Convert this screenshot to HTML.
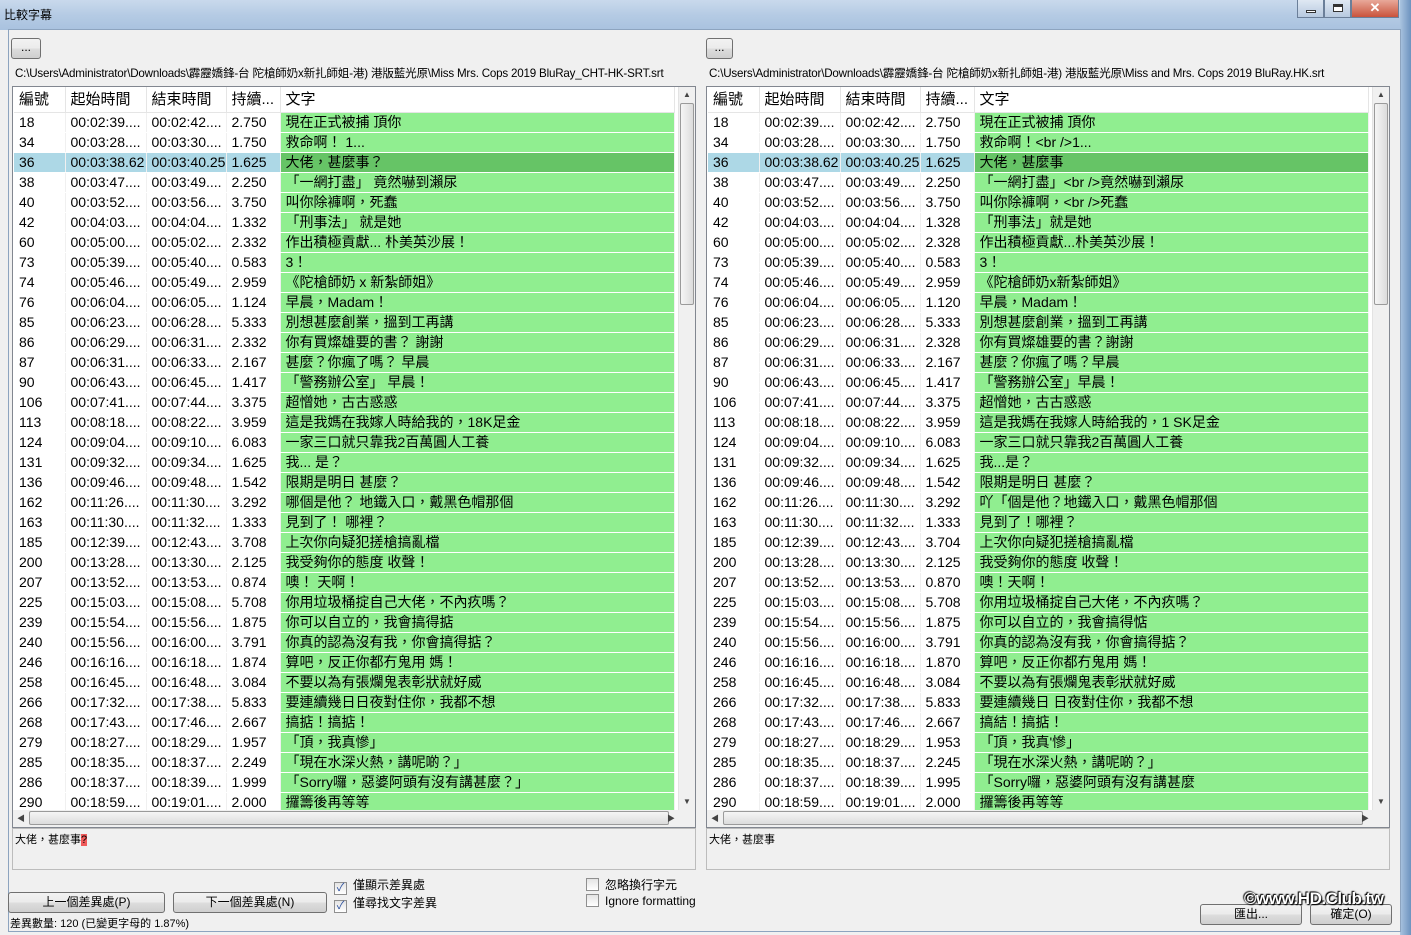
<!DOCTYPE html>
<html><head><meta charset="utf-8">
<style>
*{box-sizing:border-box;margin:0;padding:0}
body{width:1411px;height:935px;overflow:hidden;background:#f0f0f0;font-family:"Liberation Sans","Noto Sans CJK TC",sans-serif;position:relative}
.title{position:absolute;left:0;top:0;width:1411px;height:30px;background:linear-gradient(#c9d9ec,#b5cbe4 50%,#a9c2df);}
.title span{position:absolute;left:4px;top:6px;font-size:12px;color:#000}
.frameR{position:absolute;left:1400px;top:0;width:11px;height:935px;background:linear-gradient(90deg,#aac4e0,#6d93bf)}
.client{position:absolute;left:8px;top:29px;width:1393px;height:903px;background:#f0f0f0;border:1px solid #8da4bf}
.wbtn{position:absolute;top:0;height:18px;border:1px solid #6b7f99;border-top:none;background:linear-gradient(#dfe8f3,#b7c9df);}
.close{background:linear-gradient(#e8a99a,#c9533c);}
.btn{position:absolute;border:1px solid #707070;border-radius:3px;background:linear-gradient(#f2f2f2,#ebebeb 50%,#dddddd 51%,#cfcfcf);font-size:12px;text-align:center;color:#000}
.path{position:absolute;font-size:11.6px;top:65px;white-space:nowrap;letter-spacing:-0.2px}
.list{position:absolute;top:86px;width:684px;height:742px;background:#fff;border:1px solid #828790;overflow:hidden}
table{position:absolute;left:1px;top:0;border-collapse:collapse;table-layout:fixed;font-size:14px}
td,th{height:19px;line-height:19px;padding:0 0 0 5px;white-space:nowrap;overflow:hidden;border-right:1px solid #fff;border-bottom:1px solid #fff;font-weight:normal;text-align:left}
th{height:25px;line-height:25px;font-size:15px;border-right:1px solid #e5e5e5;border-bottom:1px solid #e5e5e5}
td.t{background:#90ee90}
tr.sel td{background:#add8e6}
tr.sel td.t{background:#66c466}
td{background:#fff;border-right:1px solid #f0f0f0}
.vs{position:absolute;right:0;top:0;width:17px;height:724px;background:#f0f0f0;border-left:1px solid #e3e3e3}
.thumb{position:absolute;left:1px;top:16px;width:14px;height:202px;border:1px solid #9a9a9a;border-radius:2px;background:linear-gradient(90deg,#f5f5f5,#dcdcdc)}
.hs{position:absolute;left:0;bottom:0;width:682px;height:17px;background:#f0f0f0}
.hthumb{position:absolute;left:16px;top:1px;width:640px;height:14px;border:1px solid #9a9a9a;border-radius:2px;background:linear-gradient(#f5f5f5,#dcdcdc)}
.arr{position:absolute;font-size:8px;color:#444}
.tb{position:absolute;top:828px;width:684px;height:42px;background:#f0f0f0;border:1px solid #bcbcbc;font-size:11px;padding:2px 2px}
.cb{position:absolute;font-size:12px}
.cb i{display:inline-block;width:13px;height:13px;border:1px solid #8f8f8f;background:linear-gradient(#e4e4e4,#fff);vertical-align:-2px;margin-right:6px;font-style:normal;font-size:11px;line-height:11px;text-align:center;color:#2a4f9e}
</style></head><body>
<div class="title"><span>比較字幕</span></div>
<div class="wbtn" style="left:1297px;width:27px"><div style="position:absolute;left:8px;top:10px;width:10px;height:3px;background:#fff;border:1px solid #333"></div></div>
<div class="wbtn" style="left:1324px;width:27px"><div style="position:absolute;left:8px;top:4px;width:10px;height:8px;border:1px solid #333;border-top:3px solid #333;background:#fff"></div></div>
<div class="wbtn close" style="left:1351px;width:48px;color:#fff;font-size:13px;text-align:center;font-weight:bold;line-height:16px">✕</div>
<div class="frameR"></div>
<div class="client"></div>

<div class="btn" style="left:11px;top:38px;width:30px;height:21px;line-height:17px">...</div>
<div class="btn" style="left:706px;top:38px;width:27px;height:21px;line-height:17px">...</div>
<div class="path" style="left:15px">C:\Users\Administrator\Downloads\霹靂嬌鋒-台 陀槍師奶x新扎師姐-港) 港版藍光原\Miss  Mrs. Cops 2019 BluRay_CHT-HK-SRT.srt</div>
<div class="path" style="left:709px">C:\Users\Administrator\Downloads\霹靂嬌鋒-台 陀槍師奶x新扎師姐-港) 港版藍光原\Miss and Mrs. Cops 2019 BluRay.HK.srt</div>

<div class="list" style="left:12px">
<table><colgroup><col style="width:51px"><col style="width:81px"><col style="width:80px"><col style="width:54px"><col style="width:394px"></colgroup>
<tr><th>編號</th><th>起始時間</th><th>結束時間</th><th>持續...</th><th>文字</th></tr>
<tr><td>18</td><td>00:02:39....</td><td>00:02:42....</td><td>2.750</td><td class="t">現在正式被捕 頂你</td></tr>
<tr><td>34</td><td>00:03:28....</td><td>00:03:30....</td><td>1.750</td><td class="t">救命啊！ 1...</td></tr>
<tr class="sel"><td>36</td><td>00:03:38.62</td><td>00:03:40.25</td><td>1.625</td><td class="t">大佬，甚麼事？</td></tr>
<tr><td>38</td><td>00:03:47....</td><td>00:03:49....</td><td>2.250</td><td class="t">「一網打盡」 竟然嚇到瀨尿</td></tr>
<tr><td>40</td><td>00:03:52....</td><td>00:03:56....</td><td>3.750</td><td class="t">叫你除褲啊，死蠢</td></tr>
<tr><td>42</td><td>00:04:03....</td><td>00:04:04....</td><td>1.332</td><td class="t">「刑事法」 就是她</td></tr>
<tr><td>60</td><td>00:05:00....</td><td>00:05:02....</td><td>2.332</td><td class="t">作出積極貢獻... 朴美英沙展！</td></tr>
<tr><td>73</td><td>00:05:39....</td><td>00:05:40....</td><td>0.583</td><td class="t">3！</td></tr>
<tr><td>74</td><td>00:05:46....</td><td>00:05:49....</td><td>2.959</td><td class="t">《陀槍師奶 x 新紮師姐》</td></tr>
<tr><td>76</td><td>00:06:04....</td><td>00:06:05....</td><td>1.124</td><td class="t">早晨，Madam！</td></tr>
<tr><td>85</td><td>00:06:23....</td><td>00:06:28....</td><td>5.333</td><td class="t">別想甚麼創業，搵到工再講</td></tr>
<tr><td>86</td><td>00:06:29....</td><td>00:06:31....</td><td>2.332</td><td class="t">你有買燦雄要的書？ 謝謝</td></tr>
<tr><td>87</td><td>00:06:31....</td><td>00:06:33....</td><td>2.167</td><td class="t">甚麼？你瘋了嗎？ 早晨</td></tr>
<tr><td>90</td><td>00:06:43....</td><td>00:06:45....</td><td>1.417</td><td class="t">「警務辦公室」 早晨！</td></tr>
<tr><td>106</td><td>00:07:41....</td><td>00:07:44....</td><td>3.375</td><td class="t">超憎她，古古惑惑</td></tr>
<tr><td>113</td><td>00:08:18....</td><td>00:08:22....</td><td>3.959</td><td class="t">這是我媽在我嫁人時給我的，18K足金</td></tr>
<tr><td>124</td><td>00:09:04....</td><td>00:09:10....</td><td>6.083</td><td class="t">一家三口就只靠我2百萬圓人工養</td></tr>
<tr><td>131</td><td>00:09:32....</td><td>00:09:34....</td><td>1.625</td><td class="t">我... 是？</td></tr>
<tr><td>136</td><td>00:09:46....</td><td>00:09:48....</td><td>1.542</td><td class="t">限期是明日 甚麼？</td></tr>
<tr><td>162</td><td>00:11:26....</td><td>00:11:30....</td><td>3.292</td><td class="t">哪個是他？ 地鐵入口，戴黑色帽那個</td></tr>
<tr><td>163</td><td>00:11:30....</td><td>00:11:32....</td><td>1.333</td><td class="t">見到了！ 哪裡？</td></tr>
<tr><td>185</td><td>00:12:39....</td><td>00:12:43....</td><td>3.708</td><td class="t">上次你向疑犯搓槍搞亂檔</td></tr>
<tr><td>200</td><td>00:13:28....</td><td>00:13:30....</td><td>2.125</td><td class="t">我受夠你的態度 收聲！</td></tr>
<tr><td>207</td><td>00:13:52....</td><td>00:13:53....</td><td>0.874</td><td class="t">噢！ 天啊！</td></tr>
<tr><td>225</td><td>00:15:03....</td><td>00:15:08....</td><td>5.708</td><td class="t">你用垃圾桶掟自己大佬，不內疚嗎？</td></tr>
<tr><td>239</td><td>00:15:54....</td><td>00:15:56....</td><td>1.875</td><td class="t">你可以自立的，我會搞得掂</td></tr>
<tr><td>240</td><td>00:15:56....</td><td>00:16:00....</td><td>3.791</td><td class="t">你真的認為沒有我，你會搞得掂？</td></tr>
<tr><td>246</td><td>00:16:16....</td><td>00:16:18....</td><td>1.874</td><td class="t">算吧，反正你都冇鬼用 媽！</td></tr>
<tr><td>258</td><td>00:16:45....</td><td>00:16:48....</td><td>3.084</td><td class="t">不要以為有張爛鬼表彰狀就好威</td></tr>
<tr><td>266</td><td>00:17:32....</td><td>00:17:38....</td><td>5.833</td><td class="t">要連續幾日日夜對住你，我都不想</td></tr>
<tr><td>268</td><td>00:17:43....</td><td>00:17:46....</td><td>2.667</td><td class="t">搞掂！搞掂！</td></tr>
<tr><td>279</td><td>00:18:27....</td><td>00:18:29....</td><td>1.957</td><td class="t">「頂，我真慘」</td></tr>
<tr><td>285</td><td>00:18:35....</td><td>00:18:37....</td><td>2.249</td><td class="t">「現在水深火熱，講呢啲？」</td></tr>
<tr><td>286</td><td>00:18:37....</td><td>00:18:39....</td><td>1.999</td><td class="t">「Sorry囉，惡婆阿頭有沒有講甚麼？」</td></tr>
<tr><td>290</td><td>00:18:59....</td><td>00:19:01....</td><td>2.000</td><td class="t">攞籌後再等等</td></tr>
<tr><td></td><td></td><td></td><td></td><td class="t"></td></tr>
</table>
<div class="vs"><div class="arr" style="left:4px;top:3px">▲</div><div class="thumb"></div><div class="arr" style="left:4px;top:710px">▼</div></div>
<div class="hs"><div class="arr" style="left:4px;top:3px">◀</div><div class="hthumb"></div><div class="arr" style="left:654px;top:3px">▶</div></div>
</div>
<div class="tb" style="left:12px">大佬，甚麼事<span style="background:#f05a5a">?</span></div>

<div class="list" style="left:706px">
<table><colgroup><col style="width:51px"><col style="width:81px"><col style="width:80px"><col style="width:54px"><col style="width:394px"></colgroup>
<tr><th>編號</th><th>起始時間</th><th>結束時間</th><th>持續...</th><th>文字</th></tr>
<tr><td>18</td><td>00:02:39....</td><td>00:02:42....</td><td>2.750</td><td class="t">現在正式被捕 頂你</td></tr>
<tr><td>34</td><td>00:03:28....</td><td>00:03:30....</td><td>1.750</td><td class="t">救命啊！&lt;br /&gt;1...</td></tr>
<tr class="sel"><td>36</td><td>00:03:38.62</td><td>00:03:40.25</td><td>1.625</td><td class="t">大佬，甚麼事</td></tr>
<tr><td>38</td><td>00:03:47....</td><td>00:03:49....</td><td>2.250</td><td class="t">「一網打盡」&lt;br /&gt;竟然嚇到瀨尿</td></tr>
<tr><td>40</td><td>00:03:52....</td><td>00:03:56....</td><td>3.750</td><td class="t">叫你除褲啊，&lt;br /&gt;死蠢</td></tr>
<tr><td>42</td><td>00:04:03....</td><td>00:04:04....</td><td>1.328</td><td class="t">「刑事法」就是她</td></tr>
<tr><td>60</td><td>00:05:00....</td><td>00:05:02....</td><td>2.328</td><td class="t">作出積極貢獻...朴美英沙展！</td></tr>
<tr><td>73</td><td>00:05:39....</td><td>00:05:40....</td><td>0.583</td><td class="t">3！</td></tr>
<tr><td>74</td><td>00:05:46....</td><td>00:05:49....</td><td>2.959</td><td class="t">《陀槍師奶x新紮師姐》</td></tr>
<tr><td>76</td><td>00:06:04....</td><td>00:06:05....</td><td>1.120</td><td class="t">早晨，Madam！</td></tr>
<tr><td>85</td><td>00:06:23....</td><td>00:06:28....</td><td>5.333</td><td class="t">別想甚麼創業，搵到工再講</td></tr>
<tr><td>86</td><td>00:06:29....</td><td>00:06:31....</td><td>2.328</td><td class="t">你有買燦雄要的書？謝謝</td></tr>
<tr><td>87</td><td>00:06:31....</td><td>00:06:33....</td><td>2.167</td><td class="t">甚麼？你瘋了嗎？早晨</td></tr>
<tr><td>90</td><td>00:06:43....</td><td>00:06:45....</td><td>1.417</td><td class="t">「警務辦公室」早晨！</td></tr>
<tr><td>106</td><td>00:07:41....</td><td>00:07:44....</td><td>3.375</td><td class="t">超憎她，古古惑惑</td></tr>
<tr><td>113</td><td>00:08:18....</td><td>00:08:22....</td><td>3.959</td><td class="t">這是我媽在我嫁人時給我的，1 SK足金</td></tr>
<tr><td>124</td><td>00:09:04....</td><td>00:09:10....</td><td>6.083</td><td class="t">一家三口就只靠我2百萬圓人工養</td></tr>
<tr><td>131</td><td>00:09:32....</td><td>00:09:34....</td><td>1.625</td><td class="t">我...是？</td></tr>
<tr><td>136</td><td>00:09:46....</td><td>00:09:48....</td><td>1.542</td><td class="t">限期是明日 甚麼？</td></tr>
<tr><td>162</td><td>00:11:26....</td><td>00:11:30....</td><td>3.292</td><td class="t">吖「個是他？地鐵入口，戴黑色帽那個</td></tr>
<tr><td>163</td><td>00:11:30....</td><td>00:11:32....</td><td>1.333</td><td class="t">見到了！哪裡？</td></tr>
<tr><td>185</td><td>00:12:39....</td><td>00:12:43....</td><td>3.704</td><td class="t">上次你向疑犯搓槍搞亂檔</td></tr>
<tr><td>200</td><td>00:13:28....</td><td>00:13:30....</td><td>2.125</td><td class="t">我受夠你的態度 收聲！</td></tr>
<tr><td>207</td><td>00:13:52....</td><td>00:13:53....</td><td>0.870</td><td class="t">噢！天啊！</td></tr>
<tr><td>225</td><td>00:15:03....</td><td>00:15:08....</td><td>5.708</td><td class="t">你用垃圾桶掟自己大佬，不內疚嗎？</td></tr>
<tr><td>239</td><td>00:15:54....</td><td>00:15:56....</td><td>1.875</td><td class="t">你可以自立的，我會搞得惦</td></tr>
<tr><td>240</td><td>00:15:56....</td><td>00:16:00....</td><td>3.791</td><td class="t">你真的認為沒有我，你會搞得掂？</td></tr>
<tr><td>246</td><td>00:16:16....</td><td>00:16:18....</td><td>1.870</td><td class="t">算吧，反正你都冇鬼用 媽！</td></tr>
<tr><td>258</td><td>00:16:45....</td><td>00:16:48....</td><td>3.084</td><td class="t">不要以為有張爛鬼表彰狀就好威</td></tr>
<tr><td>266</td><td>00:17:32....</td><td>00:17:38....</td><td>5.833</td><td class="t">要連續幾日 日夜對住你，我都不想</td></tr>
<tr><td>268</td><td>00:17:43....</td><td>00:17:46....</td><td>2.667</td><td class="t">搞結！搞掂！</td></tr>
<tr><td>279</td><td>00:18:27....</td><td>00:18:29....</td><td>1.953</td><td class="t">「頂，我真'慘」</td></tr>
<tr><td>285</td><td>00:18:35....</td><td>00:18:37....</td><td>2.245</td><td class="t">「現在水深火熱，講呢啲？」</td></tr>
<tr><td>286</td><td>00:18:37....</td><td>00:18:39....</td><td>1.995</td><td class="t">「Sorry囉，惡婆阿頭有沒有講甚麼</td></tr>
<tr><td>290</td><td>00:18:59....</td><td>00:19:01....</td><td>2.000</td><td class="t">攞籌後再等等</td></tr>
<tr><td></td><td></td><td></td><td></td><td class="t"></td></tr>
</table>
<div class="vs"><div class="arr" style="left:4px;top:3px">▲</div><div class="thumb"></div><div class="arr" style="left:4px;top:710px">▼</div></div>
<div class="hs"><div class="arr" style="left:4px;top:3px">◀</div><div class="hthumb"></div><div class="arr" style="left:654px;top:3px">▶</div></div>
</div>
<div class="tb" style="left:706px">大佬，甚麼事</div>

<div class="cb" style="left:334px;top:876px"><i>✓</i>僅顯示差異處</div>
<div class="cb" style="left:334px;top:894px"><i>✓</i>僅尋找文字差異</div>
<div class="cb" style="left:586px;top:876px"><i></i>忽略換行字元</div>
<div class="cb" style="left:586px;top:894px"><i></i>Ignore formatting</div>
<div class="btn" style="left:8px;top:892px;width:157px;height:21px;line-height:19px">上一個差異處(P)</div>
<div class="btn" style="left:173px;top:892px;width:154px;height:21px;line-height:19px">下一個差異處(N)</div>
<div style="position:absolute;left:10px;top:915px;font-size:11px">差異數量: 120 (已變更字母的 1.87%)</div>
<div class="btn" style="left:1200px;top:904px;width:102px;height:21px;line-height:19px">匯出...</div>
<div class="btn" style="left:1310px;top:904px;width:82px;height:21px;line-height:19px">確定(O)</div>
<div style="position:absolute;left:1244px;top:889px;font-size:17px;font-weight:bold;color:#fff;text-shadow:0 0 2px #000,1px 1px 1px #000,-1px -1px 1px #000;letter-spacing:-0.5px">©www.HD.Club.tw</div>
</body></html>
